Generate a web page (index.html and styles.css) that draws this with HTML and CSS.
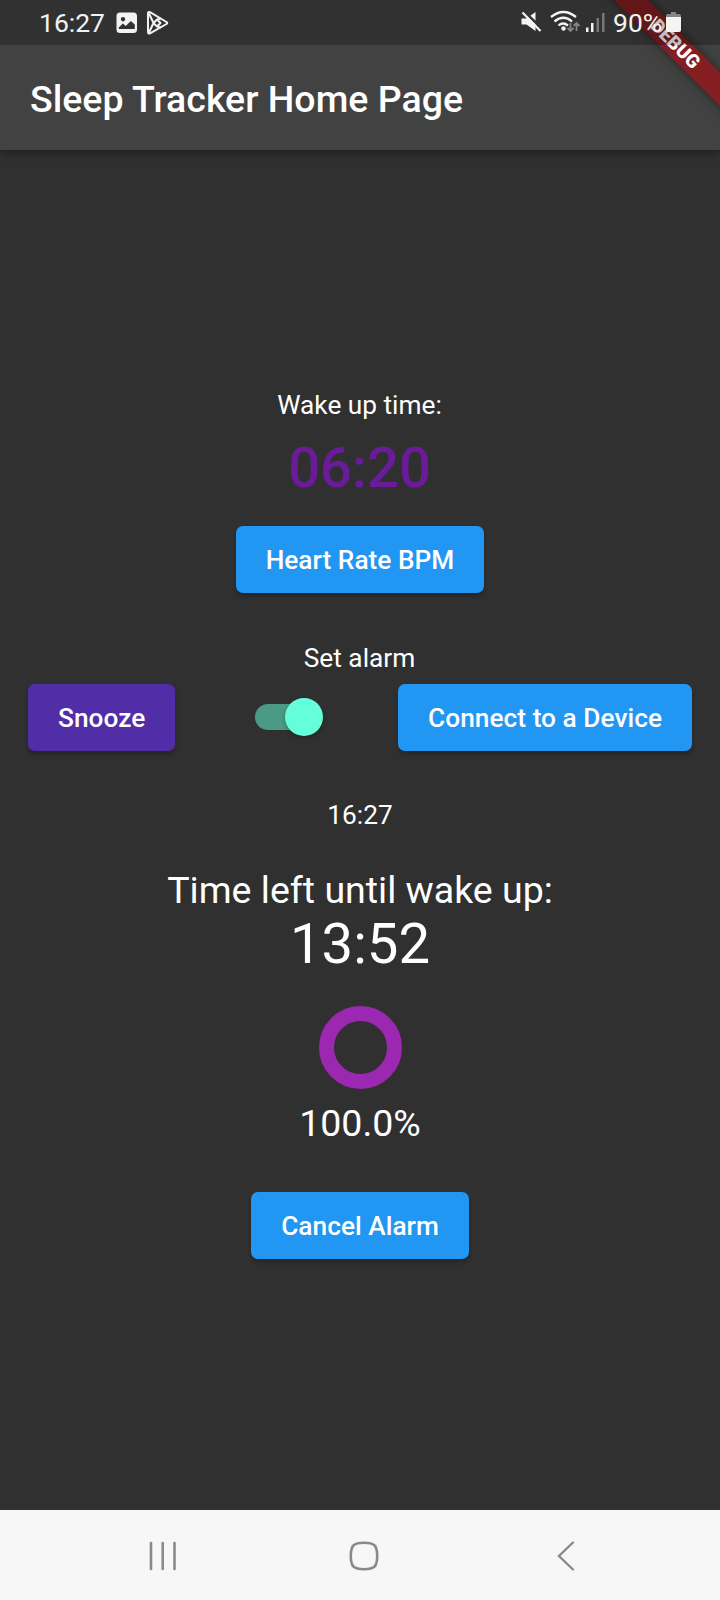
FILE: index.html
```html
<!DOCTYPE html>
<html lang="en">
<head>
<meta charset="utf-8">
<title>Sleep Tracker</title>
<link rel="stylesheet" href="styles.css">
</head>
<body>
<div class="screen">
  <header class="app-bar"><h1 class="title">Sleep Tracker Home Page</h1></header>
  <div class="banner-clip"><div class="banner">DEBUG</div></div>
  <div class="status-bar">
    <span class="clock">16:27</span>
    <svg class="icon-image" width="22" height="22" viewBox="0 0 22 22"><path fill="#f2f2f2" fill-rule="evenodd" d="M4 .5h13.500a3.500 3.500 0 0 1 3.500 3.500v13.500a3.500 3.500 0 0 1-3.500 3.500H4A3.500 3.500 0 0 1 .5 17.500V4A3.500 3.500 0 0 1 4 .5zM7 5a2.200 2.200 0 1 0 .01 0zM2.800 17h16v-4.500l-4-3.500-5 5-3-2.500-4 4z"/></svg>
    <svg class="icon-play" width="24" height="26" viewBox="0 0 24 26"><g fill="none" stroke="#f2f2f2" stroke-width="2" stroke-linejoin="round"><path d="M2 3.500v18.500q0 2 2 1.300L20.500 14q1.500-1 0-2L4 2.200Q2 1.500 2 3.500z"/><path d="M2.500 2.500 7.500 13l-5 10.500M7.500 13l3.500-3.500 4-1M7.500 13l3.500 3.500 4 1M11 9.500l3.500 3.500-3.500 3.500"/></g></svg>
    <div class="status-right">
      <svg class="signals" width="86" height="26" viewBox="0 0 86 26">
        <path fill="#f4f4f4" d="M1.500 8.500h5L15.500 2v19l-9-6.500h-5z"/>
        <path stroke="#313131" stroke-width="2.500" d="M3.500 1 22 18.500"/>
        <path stroke="#f4f4f4" stroke-width="2.200" d="M2.500 2.500 20.500 21"/>
        <g fill="none" stroke="#f4f4f4" stroke-width="2.300"><path d="M31 7Q43.500-3 56 7M34.500 11.500Q43.500 4 52 11.500M38.500 15.500Q43 11.500 48 15.500"/></g>
        <circle cx="43.500" cy="18.500" r="2.200" fill="#f4f4f4"/>
        <path fill="none" stroke="#858585" stroke-width="1.800" d="M50.500 13v8M47.500 18l3 3 3-3M56.500 21v-8M53.500 16l3-3 3 3"/>
        <path fill="#f4f4f4" d="M66 17.500h2.500V22H66zM71 13h2.500v9H71z"/><path fill="#777" d="M76.500 8H79v14h-2.500zM82 3h2.500v19H82z"/>
      </svg>
      <span class="percent">90%</span>
      <svg class="battery" width="15" height="21" viewBox="0 0 15 21"><path fill="#858585" d="M5 0h5v2h3q2 0 2 2v2H0V4q0-2 2-2h3z"/><path fill="#f4f4f4" d="M0 5h15v13q0 2-2 2H2q-2 0-2-2z"/></svg>
    </div>
  </div>
  <main class="content">
    <p class="body-text wake-label">Wake up time:</p>
    <p class="wake-time">06:20</p>
    <button class="btn">Heart Rate BPM</button>
    <p class="body-text alarm-label">Set alarm</p>
    <div class="actions">
      <button class="btn snooze">Snooze</button>
      <div class="switch"><div class="track"><div class="thumb"></div></div></div>
      <button class="btn connect">Connect to a Device</button>
    </div>
    <p class="body-text now">16:27</p>
    <p class="left-label">Time left until wake up:</p>
    <p class="left-time">13:52</p>
    <div class="ring"></div>
    <p class="ring-value">100.0%</p>
    <button class="btn">Cancel Alarm</button>
  </main>
  <nav class="nav-bar">
    <svg width="28" height="30" viewBox="0 0 28 30"><path stroke="#8a8a8a" stroke-width="2.600" stroke-linecap="round" d="M2 2v26M13.700 2v26M25.500 2v26"/></svg>
    <svg class="home" width="30" height="30" viewBox="0 0 30 30"><path fill="none" stroke="#8a8a8a" stroke-width="2.600" d="M15 1.800c10.500 0 13.200 2.700 13.200 13.200S25.500 28.200 15 28.200 1.800 25.500 1.800 15 4.500 1.800 15 1.800z"/></svg>
    <svg width="18" height="30" viewBox="0 0 18 30"><path fill="none" stroke="#8a8a8a" stroke-width="2.400" stroke-linecap="round" d="M16 1.500 2 15l14 13.500"/></svg>
  </nav>
</div>
</body>
</html>
```

FILE: styles.css
```css
* { box-sizing: border-box; }
body { margin: 0; background: #303030; font-family: Roboto, "Liberation Sans", sans-serif; color: #fff; }
p, h1 { margin: 0; font-weight: 400; white-space: nowrap; }
svg { display: block; flex: none; }
.screen { position: relative; width: 720px; height: 1600px; display: flex; flex-direction: column; overflow: hidden; background: #303030; }
.app-bar { flex: none; height: 150px; padding: 77px 30px 0; background: #424242; box-shadow: 0 3px 9px rgba(0,0,0,.4); }
.title { font-size: 37.5px; line-height: 44px; font-weight: 500; }

/* Status bar and debug ribbon lie over the app bar */
.status-bar { position: absolute; top: 0; left: 0; width: 720px; height: 45px; background: rgba(0,0,0,.25); display: flex; align-items: center; padding: 0 39px; color: #f2f2f2; }
.clock { font-size: 26.500px; line-height: 31px; width: 77px; }
.icon-play { margin-left: 8px; }
.status-right { margin-left: auto; display: flex; align-items: center; }
.signals { margin-right: 7px; }
.percent { font-size: 26.500px; line-height: 31px; width: 53px; white-space: nowrap; }
.banner-clip { position: absolute; top: 0; right: 0; width: 150px; height: 150px; overflow: hidden; }
.banner { position: absolute; left: 5.500px; top: 33.250px; width: 200px; height: 23.500px; padding-right: 2px; transform: rotate(45deg); background: #851e20; box-shadow: 0 0 11px rgba(0,0,0,.5); font-size: 19px; line-height: 24px; font-weight: 900; text-align: center; }

.content { flex: 1; display: flex; flex-direction: column; align-items: center; padding-top: 240px; }
.body-text { font-size: 26.250px; line-height: 31px; }
.wake-label, .wake-time { padding-right: 1px; }
.wake-time { margin: 14px 0 25px; font-size: 56.250px; line-height: 66px; font-weight: 500; color: #6a1b9a; }
.btn { flex: none; height: 67px; padding: 1px 30px 0; border: 0; border-radius: 7px; background: #2196f3; color: #fff; font: 500 26.250px/31px Roboto, "Liberation Sans", sans-serif; letter-spacing: .03px; white-space: nowrap; box-shadow: 0 3px 4px rgba(0,0,0,.25); }
.alarm-label { margin: 50px 0 10px; padding-right: 1px; }
.actions { width: 100%; padding: 0 28px; display: flex; align-items: center; justify-content: space-between; }
.snooze { background: #512da8; }
.switch { position: relative; left: 2.500px; top: -.5px; width: 68px; height: 38px; display: flex; align-items: center; }
.track { width: 62px; height: 26px; border-radius: 13px; background: #4a9a86; display: flex; align-items: center; }
.thumb { flex: none; width: 38px; height: 38px; margin-left: 30px; border-radius: 50%; background: #64ffda; box-shadow: 0 2px 4px rgba(0,0,0,.25); }
.now { margin: 49px 0 37px; }
.left-label, .ring-value { font-size: 37.500px; line-height: 44px; }
.left-time { font-size: 56.250px; line-height: 64px; }
.ring { width: 83px; height: 83px; margin: 30px 0 12px; border: 15px solid #9c27b0; border-radius: 50%; }
.ring-value { margin-bottom: 47px; }
.nav-bar { flex: none; height: 90px; padding: 2px 145px 0 149px; display: flex; align-items: center; justify-content: space-between; background: #f7f7f7; }
.home { margin-right: 7px; }
```
